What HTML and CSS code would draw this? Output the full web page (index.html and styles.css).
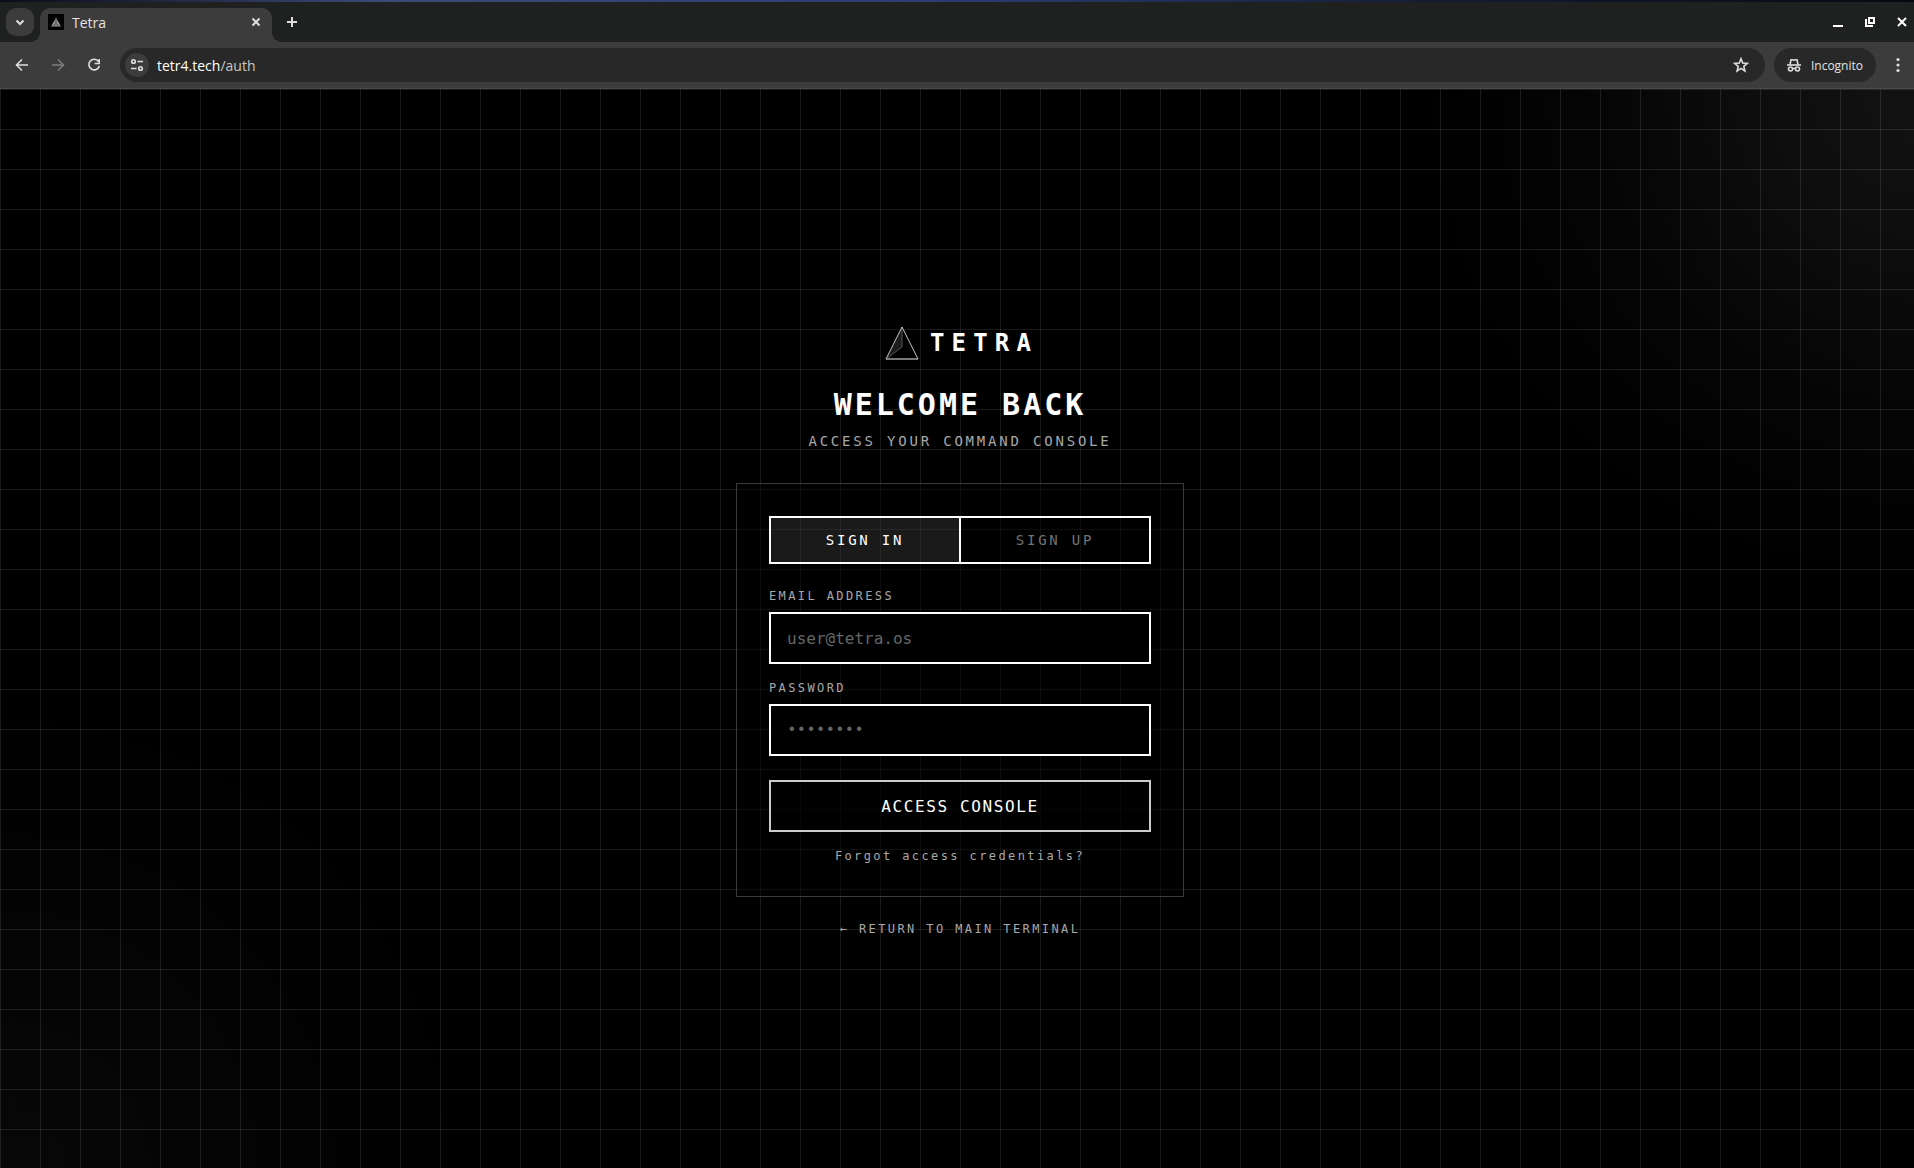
FILE: index.html
```html
<!DOCTYPE html>
<html lang="en">
  <head>
    <meta charset="utf-8" />
    <meta name="viewport" content="width=device-width, initial-scale=1" />
    <title>Tetra</title>
    <link rel="stylesheet" href="styles.css">
  </head>
  <body>
    <header class="browser">
      <div class="tab-strip">
        <button class="tab-search" aria-label="Search tabs">
          <svg width="14" height="14" viewBox="0 0 14 14"><path d="M3.5 5.5 7 9l3.5-3.5" /></svg>
        </button>
        <div class="tab">
          <svg class="favicon" width="16" height="16" viewBox="0 0 16 16">
            <rect width="16" height="16" fill="#000" />
            <path d="M8 3.5 3 12.5h10z" fill="#8d9296" />
            <path d="M8 4v5.5L5 12M8 9.5 11 12" fill="none" stroke="#4d5154" />
          </svg>
          <span class="tab-title">Tetra</span>
          <button class="tab-close" aria-label="Close tab">
            <svg width="12" height="12" viewBox="0 0 12 12"><path d="m2.5 2.5 7 7m0-7-7 7" /></svg>
          </button>
        </div>
        <button class="new-tab" aria-label="New tab">
          <svg width="14" height="14" viewBox="0 0 14 14"><path d="M7 2v10M2 7h10" /></svg>
        </button>
        <div class="window-buttons">
          <button aria-label="Minimize"><svg width="12" height="12" viewBox="0 0 12 12"><path d="M1 10h10" /></svg></button>
          <button aria-label="Restore"><svg width="12" height="12" viewBox="0 0 12 12"><path d="M5 2h5v5H5zM2 3v7h7" /></svg></button>
          <button aria-label="Close"><svg width="12" height="12" viewBox="0 0 12 12"><path d="m2 2 8 8m0-8-8 8" /></svg></button>
        </div>
      </div>

      <div class="toolbar">
        <button class="nav-button" aria-label="Back">
          <svg width="16" height="16" viewBox="0 0 16 16"><path d="M14 8H3m5-5.5L2.5 8 8 13.5" /></svg>
        </button>
        <button class="nav-button" aria-label="Forward" disabled>
          <svg width="16" height="16" viewBox="0 0 16 16"><path d="M2 8h11M8 2.5 13.5 8 8 13.5" /></svg>
        </button>
        <button class="nav-button" aria-label="Reload">
          <svg width="16" height="16" viewBox="0 0 16 16"><path d="M12.5 4.5a5.300 5.300 0 1 0 .8 4.5M13.200 2v4.5H8.700" /></svg>
        </button>
        <div class="address-bar">
          <button class="site-info" aria-label="Site information">
            <svg width="16" height="16" viewBox="0 0 16 16"><circle cx="4.5" cy="4.5" r="1.8" /><path d="M8.5 4.5H14M2 11.5h5.5" /><circle cx="11.5" cy="11.5" r="1.8" /></svg>
          </button>
          <span class="url">tetr4.tech<span class="url-path">/auth</span></span>
          <button class="bookmark" aria-label="Bookmark this tab">
            <svg width="16" height="16" viewBox="0 0 16 16"><path d="m8 1.800 1.700 4.300 4.600.3-3.5 3 1.100 4.5L8 11.400l-3.900 2.5 1.100-4.5-3.5-3 4.600-.3z" /></svg>
          </button>
        </div>
        <button class="incognito">
          <svg width="16" height="16" viewBox="0 0 16 16">
            <path d="M1 8h14" /><path d="M4 8l1-5.3h1.5L8 3.2l1.5-.5H11L12 8" />
            <circle cx="4.5" cy="12" r="2" /><circle cx="11.5" cy="12" r="2" /><path d="M6.5 11.5h3" />
          </svg>
          Incognito
        </button>
        <button class="menu" aria-label="Menu">
          <svg width="4" height="16" viewBox="0 0 4 16"><circle cx="2" cy="2.5" r="1.6" /><circle cx="2" cy="8" r="1.6" /><circle cx="2" cy="13.5" r="1.6" /></svg>
        </button>
      </div>
    </header>

    <main class="page">
      <div class="auth">
        <a class="logo" href="/">
          <svg width="40" height="40" viewBox="0 0 40 40">
            <path d="M20 4 4 36l16-12z" fill="#1c1c1c" />
            <path d="M20 4v20L4 36" fill="none" stroke="#555" />
            <path d="M4 36h32" fill="none" stroke="#777" stroke-width="2" />
            <path d="M4 36 20 4l16 32" fill="none" stroke="#c4c4c4" />
          </svg>
          <span class="logo-text">TETRA</span>
        </a>
        <h1 class="title">WELCOME BACK</h1>
        <p class="subtitle">ACCESS YOUR COMMAND CONSOLE</p>

        <section class="card">
          <div class="mode-tabs">
            <button class="mode-tab active" type="button">SIGN IN</button>
            <button class="mode-tab" type="button">SIGN UP</button>
          </div>
          <form class="auth-form">
            <div class="field">
              <label for="email">EMAIL ADDRESS</label>
              <input type="email" id="email" placeholder="user@tetra.os">
            </div>
            <div class="field">
              <label for="password">PASSWORD</label>
              <input type="password" id="password" placeholder="••••••••">
            </div>
            <button class="submit" type="submit">ACCESS CONSOLE</button>
          </form>
          <a class="link" href="#forgot">Forgot access credentials?</a>
        </section>

        <a class="link return" href="/">← RETURN TO MAIN TERMINAL</a>
      </div>
    </main>
  </body>
</html>
```

FILE: styles.css
```css
* {
  box-sizing: border-box;
}
body {
  margin: 0;
  min-height: 100vh;
  display: flex;
  flex-direction: column;
  background: #000;
  color: #fff;
  font-family: "DejaVu Sans Mono", "Liberation Mono", monospace;
}
button {
  font-family: inherit;
  color: inherit;
  background: none;
  border: none;
  padding: 0;
  cursor: pointer;
}
a {
  color: inherit;
  text-decoration: none;
}
svg {
  display: block;
}

/* Browser window */
.browser {
  font-family: "Open Sans", "Noto Sans", sans-serif;
  background: #3c3c3c;
  border-bottom: 1px solid #4a4a4a;
}
.browser button {
  display: flex;
  align-items: center;
  justify-content: center;
}
.browser button svg {
  fill: none;
  stroke: #dedede;
  stroke-width: 2;
}
.tab-strip {
  height: 42px;
  display: flex;
  align-items: flex-start;
  padding: 6px 6px 0;
  background: #1f2120;
  border-top: 2px solid #1d2746;
  border-image: linear-gradient(to right, #0c0c18, #3c4a78 20%, #2c3c70 50%, #141c34 75%, #080810) 1;
  border-width: 2px 0 0;
}
.browser .tab-search {
  width: 28px;
  height: 28px;
  border-radius: 10px;
  background: #3c3c3c;
}
.tab {
  position: relative;
  width: 232px;
  height: 34px;
  margin-left: 6px;
  padding: 0 10px 6px 8px;
  display: flex;
  align-items: center;
  gap: 8px;
  background: #3c3c3c;
  border-radius: 10px 10px 0 0;
}
/* flared feet of the active tab */
.tab::before,
.tab::after {
  content: "";
  position: absolute;
  bottom: 0;
  width: 10px;
  height: 10px;
}
.tab::before {
  right: 100%;
  background: radial-gradient(circle at 0 0, transparent 10px, #3c3c3c 10px);
}
.tab::after {
  left: 100%;
  background: radial-gradient(circle at 100% 0, transparent 10px, #3c3c3c 10px);
}
.tab-title {
  flex: 1;
  font-size: 14px;
  color: #e3e3e3;
}
.new-tab {
  width: 28px;
  height: 28px;
  margin-left: 6px;
}
.window-buttons {
  display: flex;
  gap: 20px;
  margin-left: auto;
  padding-top: 8px;
}
.browser .window-buttons svg {
  stroke: #fff;
}
.toolbar {
  height: 46px;
  display: flex;
  align-items: center;
  padding: 0 2px 0 4px;
}
.nav-button {
  width: 36px;
  height: 36px;
}
.browser .nav-button:disabled svg {
  stroke: #7c7c7c;
}
.browser .nav-button svg,
.browser .site-info svg,
.browser .bookmark svg,
.browser .incognito svg {
  stroke-width: 1.6;
}
.address-bar {
  flex: 1;
  height: 34px;
  margin-left: 8px;
  padding: 0 16px 0 5px;
  display: flex;
  align-items: center;
  background: #282828;
  border-radius: 17px;
}
.site-info {
  width: 24px;
  height: 24px;
  border-radius: 12px;
}
.browser .site-info {
  background: #3c3c3c;
}
.url {
  flex: 1;
  margin-left: 8px;
  font-size: 14px;
}
.url-path {
  color: #c7c7c7;
}
.browser .incognito {
  height: 34px;
  margin-left: 9px;
  padding: 0 13px 0 12px;
  gap: 9px;
  font-size: 12px;
  color: #e3e3e3;
  background: #282828;
  border-radius: 17px;
}
.menu {
  width: 28px;
  height: 28px;
  margin-left: 8px;
}
.browser .menu svg {
  fill: #dedede;
  stroke: none;
}

/* Auth page */
.page {
  flex: 1;
  display: flex;
  align-items: center;
  justify-content: center;
  padding: 3px 0 0 6px;
  background-image:
    linear-gradient(to right, rgba(255, 255, 255, 0.1) 1px, transparent 1px),
    linear-gradient(to bottom, rgba(255, 255, 255, 0.1) 1px, transparent 1px),
    radial-gradient(circle at 100% 0, rgba(255, 255, 255, 0.07), rgba(255, 255, 255, 0.06) 120px, rgba(255, 255, 255, 0.02) 320px, transparent 500px),
    radial-gradient(circle at 0 100%, rgba(255, 255, 255, 0.03), transparent 480px);
  background-size: 40px 40px, 40px 40px, 100% 100%, 100% 100%;
}
.auth {
  width: 100%;
  max-width: 448px;
  display: flex;
  flex-direction: column;
  align-items: center;
}
.logo {
  display: flex;
  align-items: center;
  gap: 8px;
  margin-bottom: 24px;
}
.logo-text {
  font-size: 24px;
  font-weight: bold;
  letter-spacing: 0.3em;
}
.title {
  margin: 0 0 8px;
  font-size: 30px;
  line-height: 36px;
  letter-spacing: 0.1em;
}
.subtitle {
  margin: 0 0 32px;
  font-size: 14px;
  line-height: 20px;
  letter-spacing: 0.2em;
  color: #a8a8a8;
}
.card {
  width: 100%;
  padding: 32px;
  display: flex;
  flex-direction: column;
  align-items: center;
  background: rgba(0, 0, 0, 0.4);
  border: 1px solid #3a3a3a;
}
.mode-tabs {
  width: 100%;
  height: 48px;
  display: flex;
  margin-bottom: 24px;
  border: 2px solid #fff;
}
.mode-tab {
  flex: 1;
  font-size: 14px;
  letter-spacing: 0.2em;
  color: #737373;
}
.mode-tab.active {
  color: #fff;
  background: rgba(255, 255, 255, 0.1);
  border-right: 2px solid #fff;
}
.auth-form {
  width: 100%;
  display: flex;
  flex-direction: column;
  gap: 16px;
  margin-bottom: 16px;
}
.field {
  display: flex;
  flex-direction: column;
  gap: 8px;
}
.field label,
.link {
  font-size: 12px;
  line-height: 16px;
  letter-spacing: 0.2em;
  color: #a8a8a8;
}
.field input {
  height: 52px;
  padding: 0 16px;
  font-family: inherit;
  font-size: 16px;
  color: #fff;
  background: #000;
  border: 2px solid #fff;
  border-radius: 0;
}
.field input::placeholder {
  color: #666;
}
.field input[type="password"] {
  font-family: "Liberation Mono", monospace;
}
.submit {
  height: 52px;
  margin-top: 8px;
  font-size: 16px;
  letter-spacing: 0.1em;
  background: rgba(0, 0, 0, 0.6);
  border: 2px solid #ccc;
}
.return {
  margin-top: 24px;
}
```
